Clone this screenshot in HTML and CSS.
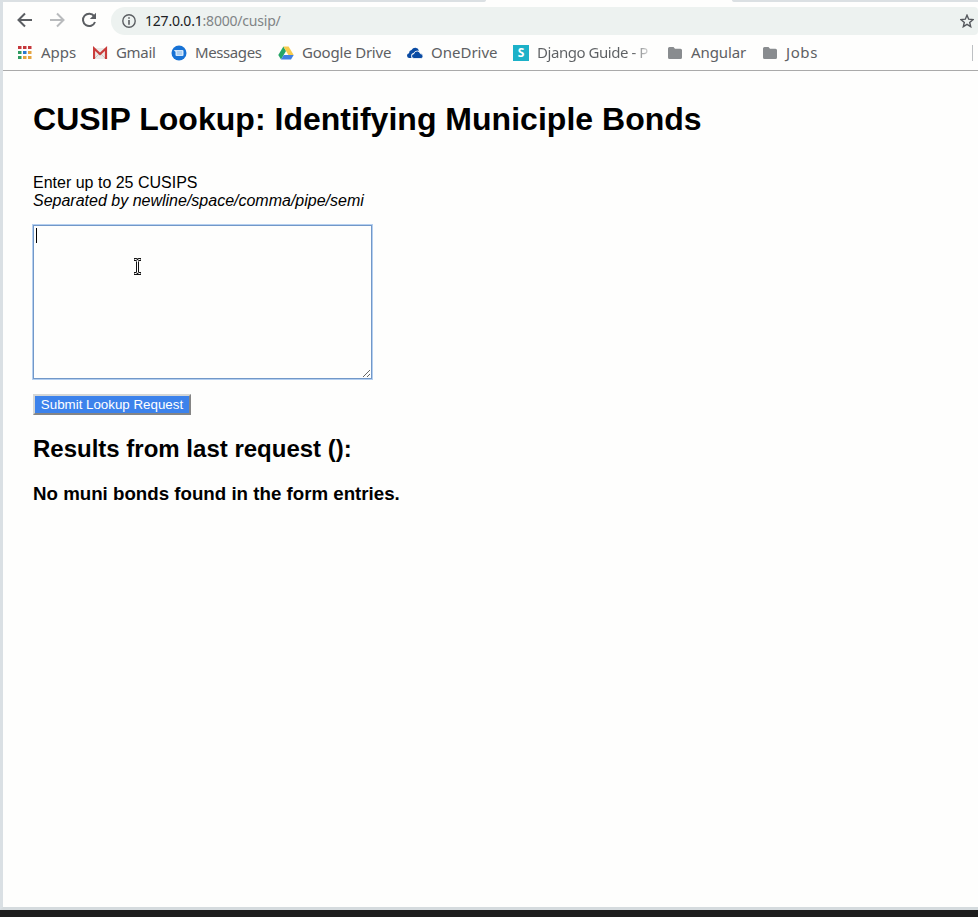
FILE: index.html
```html
<!DOCTYPE html>
<html lang="en">
<head>
<meta charset="utf-8">
<title>CUSIP Lookup</title>
<link rel="stylesheet" href="styles.css">
</head>
<body>
<div class="window">
  <div class="tabstrip"><div class="tabs-left"></div><div class="tabs-right"></div></div>
  <div class="toolbar">
    <svg class="nav" viewBox="0 0 16 16"><path d="M15 8H2M8 1.5L1.5 8L8 14.5" fill="none" stroke="#5b5e62" stroke-width="2"/></svg>
    <svg class="nav" viewBox="0 0 16 16"><path d="M1 8H14M8 1.5L14.5 8L8 14.5" fill="none" stroke="#b9bbbd" stroke-width="2"/></svg>
    <svg class="nav" viewBox="0 0 16 16"><path d="M13.2 4.2A6.2 6.2 0 1 0 14 10" fill="none" stroke="#5b5e62" stroke-width="2"/><path d="M15 .8V7H8.8Z" fill="#5b5e62"/></svg>
    <div class="omnibox">
      <svg class="info" viewBox="0 0 14 14"><circle cx="7" cy="7" r="6.2" fill="none" stroke="#5b5e62" stroke-width="1.4"/><path d="M6.2 3.2h1.6v1.6H6.2zM6.2 6.1h1.6v4.6H6.2z" fill="#5b5e62"/></svg>
      <span class="url"><b>127.0.0.1</b>:8000/cusip/</span>
      <svg class="star" viewBox="0 0 14 14"><path d="M7 1.2L8.7 5.2L13 5.6L9.7 8.4L10.7 12.7L7 10.4L3.3 12.7L4.3 8.4L1 5.6L5.3 5.2Z" fill="none" stroke="#55585d" stroke-width="1.4"/></svg>
    </div>
  </div>
  <div class="bookmarks">
    <div class="bm apps">
      <svg viewBox="0 0 16 16"><path d="M0 1h3.5v3H0zM5 1h3.5v3H5zM10 1h3.5v3H10z" fill="#c5383c"/><path d="M0 6h3.5v3H0zM0 11h3.5v3H0z" fill="#2f9b60"/><path d="M5 6h3.5v3H5z" fill="#2878d0"/><path d="M10 6h3.5v3H10zM5 11h3.5v3H5zM10 11h3.5v3H10z" fill="#e5a440"/></svg>
      <span>Apps</span></div>
    <div class="bm gmail">
      <svg viewBox="0 0 16 16"><path d="M1 3h12v11H1z" fill="#eceae8"/><path d="M2 13L7 8L12 13" fill="none" stroke="#c9c7c5"/><path d="M1 14V3.5L7 9L13 3.5V14" fill="none" stroke="#c93c3b" stroke-width="2.2"/></svg>
      <span>Gmail</span></div>
    <div class="bm messages">
      <svg viewBox="0 0 16 16"><circle cx="8" cy="8" r="7.5" fill="#1772d5"/><path d="M2.800 5H11.500q1 0 1 1v4q0 1-1 1H5.500q-1 0-1-1V7Z" fill="#d3e7fa"/><path d="M6 7h5M6 9h5" stroke="#8ab9e9"/></svg>
      <span>Messages</span></div>
    <div class="bm drive">
      <svg viewBox="0 0 16 16"><path d="M5.400 1.500L8 6L3 14.500L.3 10Z" fill="#24a566"/><path d="M5.400 1.500H10.600L15.700 10H10.400Z" fill="#f7cb4d"/><path d="M5.700 10H15.700L13 14.500H3Z" fill="#4080e2"/></svg>
      <span>Google Drive</span></div>
    <div class="bm onedrive">
      <svg viewBox="0 0 16 16"><path d="M2 13Q0 12.500 0 10.500Q0 8.700 2 8.200Q2 5.500 4.500 5Q6 2.500 8.500 2.700Q11 3 12 5.500L9 6.500L4.500 9V13Z" fill="#0a4ba3"/><path d="M7 13.500Q4.500 13.300 4.500 11Q4.700 9 6.800 8.800Q7.300 6 10.300 6Q12.800 6.200 13.300 8.600Q16 8.800 16 11.200Q16 13 14.200 13.500Z" fill="#0a4ba3" stroke="#fefefd" stroke-width=".8"/></svg>
      <span>OneDrive</span></div>
    <div class="bm django"><i class="s-icon">S</i><span>Django Guide - P</span></div>
    <div class="bm angular">
      <svg viewBox="0 0 16 16"><path d="M0 3.500Q0 2 1.500 2H5.500L7 3.700H12.500Q14 3.700 14 5.200V12.500Q14 14 12.500 14H1.500Q0 14 0 12.500Z" fill="#898c8f"/></svg>
      <span>Angular</span></div>
    <div class="bm jobs">
      <svg viewBox="0 0 16 16"><path d="M0 3.500Q0 2 1.500 2H5.500L7 3.700H12.500Q14 3.700 14 5.200V12.500Q14 14 12.500 14H1.500Q0 14 0 12.500Z" fill="#898c8f"/></svg>
      <span>Jobs</span></div>
    <div class="divider"></div>
  </div>
  <main>
    <h1>CUSIP Lookup: Identifying Municiple Bonds</h1>
    <p>Enter up to 25 CUSIPS<br><em>Separated by newline/space/comma/pipe/semi</em></p>
    <div class="entry">
      <textarea aria-label="CUSIPs"></textarea>
      <div class="caret"></div>
      <svg class="pointer" viewBox="0 0 9 17"><path d="M1 1.500H3L4.500 2.500L6 1.500H8M4.500 2.500V14.500M1 15.500H3L4.500 14.500L6 15.500H8" fill="none" stroke="#111" stroke-width="3"/><path d="M1.500 1.500H3L4.500 2.500L6 1.500H7.500M4.500 2.500V14.500M1.500 15.500H3L4.500 14.500L6 15.500H7.500" fill="none" stroke="#fff" stroke-width="1"/></svg>
    </div>
    <button type="button">Submit Lookup Request</button>
    <h2>Results from last request ():</h2>
    <h3>No muni bonds found in the form entries.</h3>
  </main>
</div>
</body>
</html>
```
FILE: styles.css
```css
* { box-sizing: border-box; }
body { margin: 0; height: 917px; overflow: hidden; background: #1e1e1e; font-family: "Liberation Sans", sans-serif; color: #000; }
.window { height: 910px; border-left: 3px solid #dae0e4; border-bottom: 3px solid #d5dbde; background: #fefefd; }
.tabstrip { height: 2px; display: flex; justify-content: space-between; }
.tabs-left { width: 483px; background: #dbe0e3; border-bottom-right-radius: 3px 2px; }
.tabs-right { width: 246px; background: #dbe0e3; border-bottom-left-radius: 3px 2px; }
.toolbar { height: 33px; padding: 5px 0 0 14px; display: flex; align-items: center; gap: 16px; }
.nav { width: 16px; height: 16px; flex: none; margin-bottom: 2px; }
.omnibox { flex: 1; height: 28px; margin-left: -2px; padding: 0 4px 0 11px; border-radius: 14px 4px 4px 14px; background: #edf2f0; display: flex; align-items: center; }
.info { width: 14px; height: 14px; }
.url { margin-left: 9px; font: 14px/20px "Noto Sans", sans-serif; letter-spacing: -0.2px; color: #808486; white-space: nowrap; }
.url b { font-weight: 400; color: #202124; }
.star { width: 14px; height: 14px; margin-left: auto; }
.bookmarks { height: 36px; padding-left: 15px; border-bottom: 1px solid #aaa; display: flex; align-items: center; color: #5d6063; font: 15px/20px "Noto Sans", sans-serif; }
.bm { display: flex; align-items: center; flex: none; white-space: nowrap; gap: 8px; }
.bm svg { width: 16px; height: 16px; flex: none; }
.bm span { padding-bottom: 2px; }
.apps { width: 75px; gap: 7px; }
.gmail { width: 78px; gap: 7px; letter-spacing: -0.3px; }
.messages { width: 107px; letter-spacing: -0.4px; }
.drive { width: 129px; letter-spacing: -0.2px; }
.onedrive { width: 106px; }
.django { width: 155px; }
.django span { width: 113px; letter-spacing: -0.45px; background: linear-gradient(90deg, #5d6063 84%, #fefefd 104%); background-clip: text; color: transparent; }
.angular { width: 95px; gap: 7px; letter-spacing: -0.1px; }
.jobs { gap: 7px; letter-spacing: 0.6px; }
.s-icon { width: 16px; height: 16px; background: #1cb1c8; color: #fff; font: bold 12px/16px "Noto Sans", sans-serif; text-align: center; }
.divider { width: 1px; height: 16px; background: #bdc0c3; margin: 0 5px 0 auto; }
main { padding: 30px 30px 0; }
h1 { margin: 0 0 36px; font-size: 32px; line-height: 37px; letter-spacing: 0.02px; }
p { margin: 0 0 15px; font-size: 16px; line-height: 18px; }
.entry { position: relative; width: 339px; height: 154px; }
textarea { display: block; width: 339px; height: 154px; margin: 0; border: 1px solid #7298c8; outline: 1px solid #b4cff0; outline-offset: 0; background: #fefefd; }
.caret { position: absolute; left: 3px; top: 3px; width: 1px; height: 15px; background: #000; }
.pointer { position: absolute; left: 100px; top: 33px; width: 9px; height: 17px; }
button { display: block; width: 158px; height: 21px; margin: 15px 0 20px; padding: 0; border: 2px solid; border-color: #d5d7d6 #858585 #858585 #d5d7d6; background: #3c82eb; color: #fff; font: 13.333px/16px "Liberation Sans", sans-serif; }
h2 { margin: 0 0 20px; font-size: 24px; line-height: 28px; }
h3 { margin: 0; font-size: 18.72px; line-height: 22px; }
```
